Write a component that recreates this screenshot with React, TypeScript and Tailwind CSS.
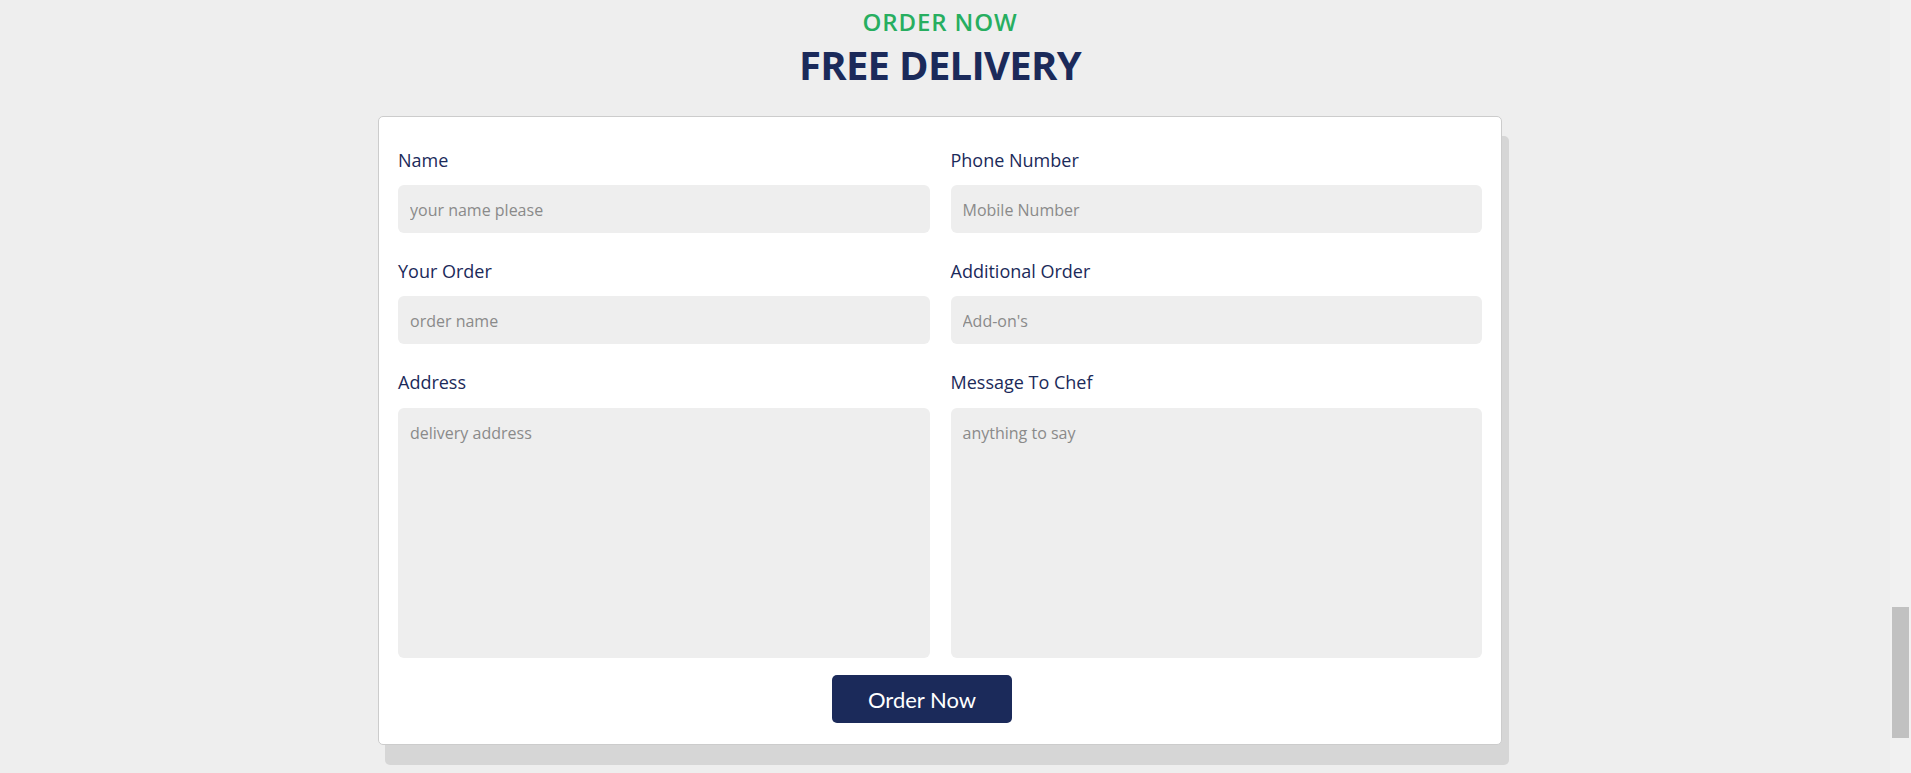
import React from "react";

const fields = [
  [
    { label: "Name", placeholder: "your name please" },
    { label: "Phone Number", placeholder: "Mobile Number" },
  ],
  [
    { label: "Your Order", placeholder: "order name" },
    { label: "Additional Order", placeholder: "Add-on's" },
  ],
];

const inputCls =
  "w-full h-[48px] rounded-[6px] bg-[#eeeeee] px-[12px] pt-[2px] text-[16px] text-[#1b2a5a] placeholder:text-[#8a8a8a] outline-none";

const areaCls =
  "mt-[12px] block h-[250px] w-full resize-none rounded-[6px] bg-[#eeeeee] px-[12px] pt-[13px] pb-[11px] text-[16px] text-[#1b2a5a] placeholder:text-[#8a8a8a] outline-none";

const App = () => {
  return (
    <div
      className="flex h-[773px] w-full bg-[#eeeeee] overflow-hidden"
      style={{ fontFamily: '"Open Sans", "Noto Sans", sans-serif' }}
    >
      <div className="flex-1">
        <div className="ml-[378px] w-[1124px]">
          <h3 className="pt-[10px] text-center text-[24px] leading-[24px] font-semibold tracking-[0.9px] text-[#27ae60]">
            ORDER NOW
          </h3>
          <h1 className="mt-[11px] text-center text-[40px] leading-[40px] font-bold tracking-[-0.7px] text-[#1b2a5a]">
            FREE DELIVERY
          </h1>

          <form
            className="mt-[31px] rounded-[5px] border border-[#cccccc] bg-white px-[19px] pt-[30px] pb-[21px] shadow-[7px_20px_0_0_#d6d6d6]"
            onSubmit={(e) => e.preventDefault()}
          >
            {fields.map((row, i) => (
              <div key={i} className="mb-[25px] grid grid-cols-2 gap-x-[21px]">
                {row.map((f) => (
                  <div key={f.label}>
                    <label className="block text-[18px] leading-[27px] text-[#1b2a5a]">
                      {f.label}
                    </label>
                    <input
                      type="text"
                      placeholder={f.placeholder}
                      className={"mt-[11px] " + inputCls}
                    />
                  </div>
                ))}
              </div>
            ))}

            <div className="grid grid-cols-2 gap-x-[21px]">
              <div>
                <label className="block text-[18px] leading-[27px] text-[#1b2a5a]">
                  Address
                </label>
                <textarea placeholder="delivery address" className={areaCls} />
              </div>
              <div>
                <label className="block text-[18px] leading-[27px] text-[#1b2a5a]">
                  Message To Chef
                </label>
                <textarea placeholder="anything to say" className={areaCls} />
              </div>
            </div>

            <div className="mt-[17px] pl-[434px]">
              <button
                type="submit"
                className="h-[48px] w-[180px] rounded-[5px] bg-[#1b2a5a] text-[22px] text-white"
                style={{ fontFamily: "Lato, sans-serif" }}
              >
                Order Now
              </button>
            </div>
          </form>
        </div>
      </div>

      <div className="relative w-[21px] bg-[#f1f1f1]">
        <div className="absolute left-[2px] top-[607px] h-[131px] w-[17px] bg-[#c1c1c1]" />
      </div>
    </div>
  );
};

export default App;
